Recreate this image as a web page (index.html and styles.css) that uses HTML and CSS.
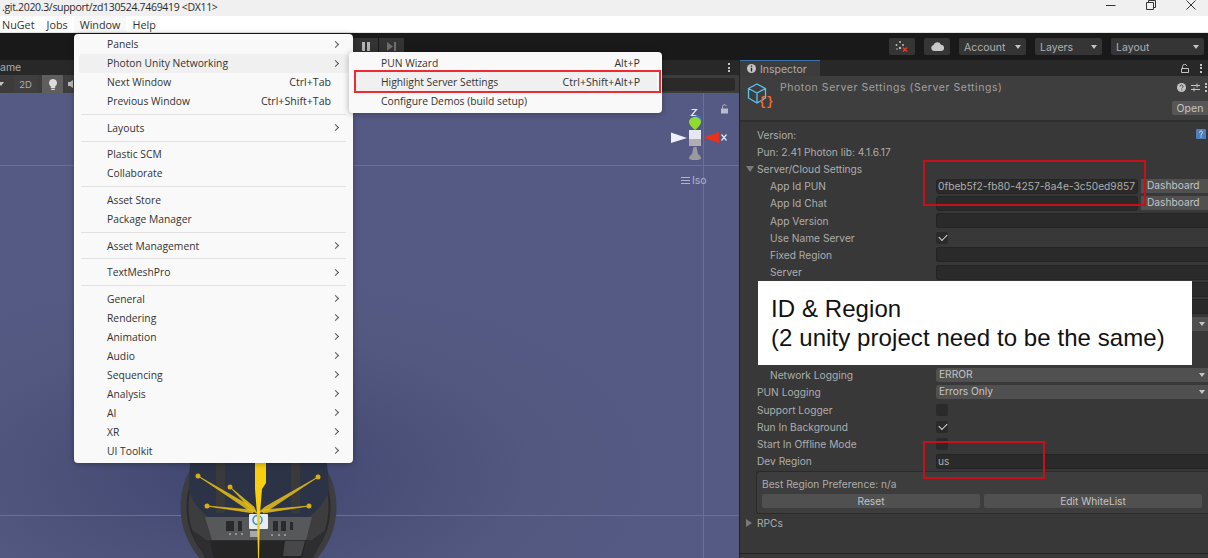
FILE: index.html
```html
<!DOCTYPE html>
<html lang="en">
<head>
    <meta charset="UTF-8">
    <meta name="viewport" content="width=device-width, initial-scale=1.0">
    <title>Photon Server Settings</title>
    <link rel="stylesheet" href="styles.css">
</head>
<body>

    <div class="titlebar">
        <span class="title-text">.git.2020.3/support/zd130524.7469419 &lt;DX11&gt;</span>
        <div class="window-controls">
            <svg width="10" height="10" viewBox="0 0 10 10"><path d="M0 5.500h9.500" stroke="#333" fill="none"/></svg>
            <svg width="10" height="10" viewBox="0 0 10 10"><path d="M.5 2.500h7v7h-7zM2.500 2.500V.5h7v7h-2" stroke="#333" fill="none"/></svg>
            <svg width="10" height="10" viewBox="0 0 10 10"><path d="M.5.5l9 9M9.500.5l-9 9" stroke="#333" fill="none"/></svg>
        </div>
    </div>

    <div class="menubar">
        <span class="menubar-item item-nuget">NuGet</span>
        <span class="menubar-item">Jobs</span>
        <span class="menubar-item active">Window</span>
        <span class="menubar-item">Help</span>
    </div>

    <div class="toolbar">
        <div class="play-group">
            <span class="play-btn">
                <svg width="8" height="9" viewBox="0 0 8 9"><path d="M0 0h3v9H0zM5 0h3v9H5z" fill="#b4b4b4"/></svg>
            </span>
            <span class="play-btn">
                <svg width="9" height="9" viewBox="0 0 9 9"><path d="M0 0l6 4.500-6 4.500zM7 0h2v9H7z" fill="#6e6e6e"/></svg>
            </span>
        </div>
        <div class="tool-group">
            <span class="tool-btn icon-btn">
                <svg width="14" height="12" viewBox="0 0 14 12">
                    <g fill="#bcbcbc">
                        <circle cx="5" cy="1" r="1"/><circle cx="1.500" cy="4" r="1"/><circle cx="8" cy="4" r="1"/><circle cx="5" cy="7" r="1.200"/><circle cx="2" cy="8" r=".8"/>
                    </g>
                    <path d="M8 6.500l4 4M12 6.500l-4 4" stroke="#e8392c" stroke-width="1.600"/>
                </svg>
            </span>
            <span class="tool-btn icon-btn">
                <svg width="13" height="9" viewBox="0 0 13 9"><path d="M3 9a3 3 0 0 1-.5-5.900A4 4 0 0 1 10 2.800 3.100 3.100 0 0 1 10 9z" fill="#c8c8c8"/></svg>
            </span>
            <span class="tool-btn drop account"><span class="drop-text">Account</span><i class="caret"></i></span>
            <span class="tool-btn drop layers"><span class="drop-text">Layers</span><i class="caret"></i></span>
            <span class="tool-btn drop layout"><span class="drop-text">Layout</span><i class="caret"></i></span>
        </div>
    </div>

    <div class="workspace">
        <div class="scene">
            <div class="scene-tabs">
                <span class="scene-tab-name">ame</span>
                <span class="dots"><i></i><i></i><i></i></span>
            </div>
            <div class="scene-tools">
                <i class="caret small"></i>
                <span class="scene-btn btn-2d">2D</span>
                <span class="scene-btn btn-light">
                    <svg width="8" height="11" viewBox="0 0 8 11"><path d="M4 0a4 4 0 0 1 2.200 7.300V9H1.800V7.300A4 4 0 0 1 4 0zM2.200 9.700h3.600V11H2.200z" fill="#dcdcdc"/></svg>
                </span>
                <span class="scene-btn btn-audio">
                    <svg width="7" height="8" viewBox="0 0 7 8"><path d="M0 2h2l3-2v8L2 6H0z" fill="#bdbdbd"/></svg>
                </span>
                <span class="scene-search"></span>
            </div>
            <div class="canvas">
                <div class="grid-line line-a"></div>
                <div class="grid-line line-b"></div>
                <div class="grid-line line-v"></div>

                <svg class="gizmo" width="80" height="100" viewBox="660 100 80 100">
                    <path d="M691.500 109.500h5l-5 6h5" stroke="#e6e7ef" stroke-width="1.200" fill="none"/>
                    <circle cx="697" cy="120" r="4.500" fill="#3f70d8"/>
                    <path d="M689 122a6 5 0 0 1 12 0q0 3-6 8-6-5-6-8z" fill="#8fdc2e"/>
                    <rect x="689" y="130" width="12" height="9" fill="#e6e7f0"/>
                    <rect x="689" y="139" width="12" height="7" fill="#aeaeb4"/>
                    <path d="M671 132.500L687 138l-16 5z" fill="#eff0f5"/>
                    <path d="M719 132v11l-16-5.500z" fill="#e8301f"/>
                    <path d="M721.500 134.500l5 6M726.500 134.500l-5 6" stroke="#e6e7ef" stroke-width="1.200"/>
                    <path d="M693.500 147h3l1.500 7q3 2 3 4t-6 2-6-2 3-4z" fill="#9a9a9e"/>
                    <path d="M721 108.500h7v5h-7z" fill="#b9bbc8"/>
                    <path d="M722.500 108.500v-2a2 2 0 0 1 3.800-.6" fill="none" stroke="#b9bbc8"/>
                    <path d="M681 177.500h9M681 180.500h9M681 183.500h9" stroke="#b1b3c6"/>
                </svg>
                <span class="iso-label">Iso</span>

                <svg class="robot" width="180" height="118" viewBox="170 440 180 118">
                    <circle cx="258.500" cy="507" r="78" fill="#3d3d3f"/>
                    <circle cx="258.500" cy="507" r="71" fill="none" stroke="#2b2b2d" stroke-width="2"/>
                    <path d="M190 463h137l2 27q-4 14-20 27H208q-16-13-19-27z" fill="#2c3347"/>
                    <path d="M216 463h9v50h-9zM291 463h9v50h-9z" fill="#3b3a3a"/>
                    <path d="M205 517h107l-6 23H212z" fill="#56585a"/>
                    <path d="M190 528l15 30h108l15-30-16 12H206z" fill="#2e2e30"/>
                    <path d="M210 541h96l-4 17h-88z" fill="#252526"/>
                    <path d="M285 541h20l-4 15h-18z" fill="#47474a"/>
                    <g fill="#2a2a2c">
                        <rect x="226" y="521" width="8" height="10"/><rect x="238" y="521" width="4" height="10"/>
                        <rect x="273" y="521" width="5" height="10"/><rect x="281" y="521" width="5" height="10"/><rect x="290" y="522" width="3" height="8"/>
                    </g>
                    <g fill="#a8a8a8">
                        <circle cx="230" cy="534" r="1"/><circle cx="236" cy="534" r="1"/><circle cx="242" cy="534" r="1"/>
                        <circle cx="272" cy="535" r="1"/><circle cx="279" cy="535" r="1"/><circle cx="285" cy="535" r="1"/>
                        <rect x="250" y="531" width="8" height="6"/>
                    </g>
                    <rect x="249" y="514" width="19" height="15" rx="1" fill="#e6ecf0"/>
                    <circle cx="257.500" cy="520" r="4.500" fill="none" stroke="#3a8fc4" stroke-width="1.500"/>
                    <g fill="#e6bf1a" fill-opacity=".85" stroke="#f1c40a" stroke-width=".6">
                        <path d="M198 476l54 31 5 6-10-4zM230 487l24 20 2 5-7-5zM318 477l-53 30-7 6 12-4zM207 506l46 4v3zM309 506l-46 4v3z"/>
                    </g>
                    <path d="M255 463h11v20l-4 6-2 25-1 44h-1l-1-44-2-25z" fill="#f7cf0f"/>
                    <g fill="#d9ae12">
                        <circle cx="198" cy="476" r="2.500"/><circle cx="230" cy="487" r="2.500"/><circle cx="318" cy="477" r="2.500"/><circle cx="207" cy="506" r="2.500"/><circle cx="309" cy="506" r="2.500"/>
                    </g>
                </svg>
            </div>
        </div>

        <div class="inspector">
            <div class="inspector-tabs">
                <div class="inspector-tab">
                    <svg width="9" height="9" viewBox="0 0 9 9"><circle cx="4.500" cy="4.500" r="4.500" fill="#c4c4c4"/><path d="M3.800 1.500h1.400v1.300H3.800zM3.800 3.800h1.400v3.700H3.800z" fill="#282828"/></svg>
                    <span class="tab-text">Inspector</span>
                </div>
                <div class="tab-actions">
                    <svg width="8" height="9" viewBox="0 0 8 9"><path d="M1.500 4V2.500a2.200 2.200 0 0 1 4.300-.6M.5 4.500h7v4h-7z" stroke="#c4c4c4" fill="none"/></svg>
                    <span class="dots"><i></i><i></i><i></i></span>
                </div>
            </div>

            <div class="inspector-header">
                <svg class="asset-icon" width="26" height="26" viewBox="0 0 26 26">
                    <path d="M10 2l8.500 4.500v9.500L10 21l-8.500-5V6.500zM1.500 6.500L10 11l8.500-4.500M10 11v10" stroke="#5cc4ee" stroke-width="1.300" fill="#3e3e3e" stroke-linejoin="round"/>
                    <text class="braces" x="12" y="23">{}</text>
                </svg>
                <span class="asset-title">Photon Server Settings (Server Settings)</span>
                <div class="header-actions">
                    <div class="header-icons">
                        <svg width="9" height="9" viewBox="0 0 9 9"><circle cx="4.500" cy="4.500" r="4.500" fill="#c4c4c4"/><path d="M3 3.500a1.500 1.500 0 1 1 2.300 1.300L4.800 5.500M4.800 6.500v1" stroke="#3e3e3e" fill="none"/></svg>
                        <svg width="9" height="9" viewBox="0 0 9 9"><path d="M0 2.500h9M0 6.500h9M6 .5v4M3 4.500v4" stroke="#c4c4c4" fill="none"/></svg>
                        <span class="dots"><i></i><i></i><i></i></span>
                    </div>
                    <span class="open-btn">Open</span>
                </div>
            </div>

            <div class="inspector-body">
                <div class="row"><span class="label">Version:</span>
                    <svg class="help-icon" width="10" height="10" viewBox="0 0 10 10"><rect width="10" height="10" rx="1" fill="#4f7fb8"/><path d="M3.500 3.500a1.500 1.500 0 1 1 2.300 1.300l-.8.700v1M5 7.500v1" stroke="#dfe9f5" fill="none"/></svg>
                </div>
                <div class="row"><span class="label">Pun: 2.41 Photon lib: 4.1.6.17</span></div>
                <div class="row section"><i class="tri down"></i><span class="label">Server/Cloud Settings</span></div>
                <div class="row sub"><span class="label">App Id PUN</span><span class="field short">0fbeb5f2-fb80-4257-8a4e-3c50ed9857</span><span class="dash-btn">Dashboard</span></div>
                <div class="row sub"><span class="label">App Id Chat</span><span class="field short"></span><span class="dash-btn">Dashboard</span></div>
                <div class="row sub"><span class="label">App Version</span><span class="field"></span></div>
                <div class="row sub"><span class="label">Use Name Server</span><span class="check on"></span></div>
                <div class="row sub"><span class="label">Fixed Region</span><span class="field"></span></div>
                <div class="row sub"><span class="label">Server</span><span class="field"></span></div>
                <div class="row sub"><span class="label"></span><span class="field"></span></div>
                <div class="row sub"><span class="label"></span><span class="field"></span></div>
                <div class="row sub"><span class="label"></span><span class="select"></span></div>
                <div class="row sub"></div>
                <div class="row sub"></div>
                <div class="row sub"><span class="label">Network Logging</span><span class="select">ERROR</span></div>
                <div class="row"><span class="label">PUN Logging</span><span class="select">Errors Only</span></div>
                <div class="row"><span class="label">Support Logger</span><span class="check"></span></div>
                <div class="row"><span class="label">Run In Background</span><span class="check on"></span></div>
                <div class="row"><span class="label">Start In Offline Mode</span><span class="check"></span></div>
                <div class="row"><span class="label">Dev Region</span><span class="field">us</span></div>

                <div class="region-box">
                    <div class="region-text">Best Region Preference: n/a</div>
                    <div class="region-buttons">
                        <span class="region-btn">Reset</span>
                        <span class="region-btn">Edit WhiteList</span>
                    </div>
                </div>
                <div class="row section rpcs"><i class="tri right"></i><span class="label">RPCs</span></div>
            </div>
            <div class="status-line"></div>
        </div>
    </div>

    <!-- Window menu, open over everything else -->
    <div class="menu window-menu">
        <div class="menu-item"><span>Panels</span><i class="chev"></i></div>
        <div class="menu-item hover"><span>Photon Unity Networking</span><i class="chev"></i></div>
        <div class="menu-item"><span>Next Window</span><em>Ctrl+Tab</em><i class="no-chev"></i></div>
        <div class="menu-item"><span>Previous Window</span><em>Ctrl+Shift+Tab</em><i class="no-chev"></i></div>
        <div class="menu-sep"></div>
        <div class="menu-item"><span>Layouts</span><i class="chev"></i></div>
        <div class="menu-sep"></div>
        <div class="menu-item"><span>Plastic SCM</span></div>
        <div class="menu-item"><span>Collaborate</span></div>
        <div class="menu-sep"></div>
        <div class="menu-item"><span>Asset Store</span></div>
        <div class="menu-item"><span>Package Manager</span></div>
        <div class="menu-sep"></div>
        <div class="menu-item"><span>Asset Management</span><i class="chev"></i></div>
        <div class="menu-sep"></div>
        <div class="menu-item"><span>TextMeshPro</span><i class="chev"></i></div>
        <div class="menu-sep"></div>
        <div class="menu-item"><span>General</span><i class="chev"></i></div>
        <div class="menu-item"><span>Rendering</span><i class="chev"></i></div>
        <div class="menu-item"><span>Animation</span><i class="chev"></i></div>
        <div class="menu-item"><span>Audio</span><i class="chev"></i></div>
        <div class="menu-item"><span>Sequencing</span><i class="chev"></i></div>
        <div class="menu-item"><span>Analysis</span><i class="chev"></i></div>
        <div class="menu-item"><span>AI</span><i class="chev"></i></div>
        <div class="menu-item"><span>XR</span><i class="chev"></i></div>
        <div class="menu-item"><span>UI Toolkit</span><i class="chev"></i></div>
    </div>

    <div class="menu photon-menu">
        <div class="menu-item"><span>PUN Wizard</span><em>Alt+P</em></div>
        <div class="menu-item hover"><span>Highlight Server Settings</span><em>Ctrl+Shift+Alt+P</em></div>
        <div class="menu-item"><span>Configure Demos (build setup)</span></div>
    </div>

    <!-- Red boxes and the note pasted on top of the screenshot -->
    <div class="mark mark-menu"></div>
    <div class="mark mark-appid"></div>
    <div class="mark mark-region"></div>
    <div class="note">ID &amp; Region<br>(2 unity project need to be the same)</div>

</body>
</html>
```

FILE: styles.css
```css
* {
    box-sizing: border-box;
}
html, body {
    margin: 0;
    height: 100%;
}
body {
    position: relative;
    width: 1208px;
    height: 558px;
    overflow: hidden;
    display: flex;
    flex-direction: column;
    font-family: 'Inter', 'Liberation Sans', sans-serif;
    font-size: 10.2px;
    color: #adadad;
    background-color: #383838;
}

/* window chrome */
.titlebar {
    height: 16px;
    flex: none;
    display: flex;
    justify-content: space-between;
    background-color: #f0f0f0;
    color: #2b2b2b;
    font-family: 'Open Sans', 'Liberation Sans', sans-serif;
    font-size: 10.5px;
    letter-spacing: -.32px;
    line-height: 14px;
    padding-left: 2px;
}
.window-controls {
    display: flex;
    gap: 25px;
    padding-right: 12px;
}
.window-controls svg {
    margin-left: 5px;
}
.menubar {
    height: 17px;
    flex: none;
    display: flex;
    background-color: #fff;
    border-bottom: 1px solid #e4e4e4;
    color: #333;
    font-family: 'Open Sans', 'Liberation Sans', sans-serif;
    font-size: 10.8px;
    line-height: 18px;
}
.menubar-item {
    padding: 0 6px;
}
.item-nuget {
    padding-left: 2px;
}
.menubar-item.active {
    background-color: #f8f8f8;
}

.toolbar {
    height: 27px;
    flex: none;
    display: flex;
    justify-content: space-between;
    padding: 5px 4px 0 353px;
    background-color: #191919;
}
.play-group {
    display: flex;
    gap: 1px;
}
.play-btn {
    width: 25px;
    height: 17px;
    display: flex;
    align-items: center;
    justify-content: center;
    background-color: #333;
}
.tool-group {
    display: flex;
    gap: 9px;
}
.tool-btn {
    height: 17px;
    display: flex;
    align-items: center;
    background-color: #353535;
    border-radius: 2px;
    color: #b0b0b0;
}
.icon-btn {
    width: 26px;
    justify-content: center;
}
.drop {
    justify-content: space-between;
    padding: 0 5px;
    font-size: 10.5px;
}
.drop-text {
    padding-top: 1px;
}
.account { width: 67px; }
.layers { width: 67px; }
.layout { width: 93px; }
.caret {
    width: 0;
    height: 0;
    border-left: 3.5px solid transparent;
    border-right: 3.5px solid transparent;
    border-top: 4px solid #c4c4c4;
}

/* scene panel */
.workspace {
    flex: 1;
    display: flex;
    min-height: 0;
}
.scene {
    width: 739px;
    display: flex;
    flex-direction: column;
}
.scene-tabs {
    height: 15px;
    display: flex;
    justify-content: space-between;
    align-items: center;
    padding-right: 9px;
    background-color: #282828;
    font-size: 10.5px;
}
.dots {
    display: inline-flex;
    flex-direction: column;
    gap: 1.5px;
}
.dots i {
    width: 2px;
    height: 2px;
    background-color: #c4c4c4;
}
.scene-tools {
    height: 18px;
    display: flex;
    align-items: center;
    background-color: #3c3c3c;
}
.caret.small {
    margin: 0 10px 0 -2px;
}
.scene-btn {
    height: 18px;
    display: flex;
    align-items: center;
    justify-content: center;
    background-color: #3f3f3f;
}
.btn-2d {
    width: 23px;
    font-size: 9.5px;
    padding-top: 1px;
}
.btn-light {
    width: 21px;
    margin-left: 5px;
    background-color: #5e5e5e;
}
.btn-audio {
    width: 12px;
    margin-left: 2px;
}
.scene-search {
    height: 13px;
    width: 80px;
    margin-left: auto;
    margin-right: 4px;
    border-radius: 3px;
    background-color: #2a2a2a;
}
.canvas {
    flex: 1;
    position: relative;
    overflow: hidden;
    background: radial-gradient(ellipse 420px 200px at 240px 380px, #3f466f 0%, #535880 70%, #555a85 100%);
}
.grid-line {
    position: absolute;
    background-color: #6b6f96;
}
.line-a {
    left: 0;
    right: 0;
    top: 72px;
    height: 1px;
}
.line-b {
    left: 0;
    right: 0;
    top: 422px;
    height: 1px;
}
.line-v {
    left: 703px;
    top: 0;
    width: 1px;
    height: 100%;
}
.gizmo {
    position: absolute;
    left: 660px;
    top: 7px;
}
.iso-label {
    position: absolute;
    left: 692px;
    top: 81px;
    color: #b1b3c6;
    font-size: 10.5px;
}
.robot {
    position: absolute;
    left: 170px;
    top: 347px;
}

/* inspector */
.inspector {
    flex: 1;
    display: flex;
    flex-direction: column;
    border-left: 1px solid #222;
}
.inspector-tabs {
    height: 16px;
    flex: none;
    display: flex;
    justify-content: space-between;
    background-color: #282828;
}
.inspector-tab {
    width: 80px;
    display: flex;
    align-items: center;
    gap: 4px;
    padding-left: 7px;
    background-color: #3c3c3c;
    border-top: 1px solid #3a72b0;
    font-size: 10.5px;
}
.tab-text {
    padding-top: 1px;
}
.tab-actions {
    display: flex;
    align-items: center;
    gap: 11px;
    padding-right: 6px;
}
.inspector-header {
    height: 46px;
    flex: none;
    display: flex;
    background-color: #3e3e3e;
    border-bottom: 2px solid #2f2f2f;
}
.asset-icon {
    margin: 6px 0 0 7px;
    flex: none;
}
.braces {
    fill: #f26a30;
    font-family: 'Liberation Mono', monospace;
    font-size: 12px;
    font-weight: bold;
}
.asset-title {
    margin: 5px 0 0 7px;
    font-size: 10.5px;
    letter-spacing: .55px;
    color: #a0a0a0;
}
.header-actions {
    margin-left: auto;
    display: flex;
    flex-direction: column;
    align-items: flex-end;
}
.header-icons {
    display: flex;
    align-items: center;
    gap: 5px;
    height: 22px;
    padding-right: 1px;
}
.open-btn {
    width: 36px;
    height: 14px;
    margin-top: 3px;
    background-color: #575757;
    border-radius: 2px 0 0 2px;
    text-align: center;
    line-height: 15px;
    font-size: 10.5px;
    color: #c4c4c4;
}
.inspector-body {
    flex: 1;
    padding-top: 4px;
}
.row {
    position: relative;
    height: 17.2px;
    display: flex;
    align-items: center;
    padding-left: 17px;
}
.row .label {
    width: 179px;
    flex: none;
}
.row.sub {
    padding-left: 30px;
}
.row.sub .label {
    width: 166px;
}
.tri {
    position: absolute;
    left: 6px;
    width: 0;
    height: 0;
}
.tri.down {
    border-left: 4px solid transparent;
    border-right: 4px solid transparent;
    border-top: 6px solid #7a7a7a;
}
.tri.right {
    border-top: 4px solid transparent;
    border-bottom: 4px solid transparent;
    border-left: 6px solid #7a7a7a;
}
.field {
    flex: 1;
    height: 15px;
    padding-left: 1px;
    line-height: 13px;
    background-color: #2a2a2a;
    border: 1px solid #242424;
    border-right: none;
    border-radius: 3px 0 0 3px;
    overflow: hidden;
    white-space: nowrap;
}
.field.short {
    flex: none;
    width: 202px;
    border-right: 1px solid #242424;
    border-radius: 3px;
}
.dash-btn {
    flex: 1;
    height: 14px;
    margin-left: 3px;
    padding-left: 6px;
    line-height: 13px;
    background-color: #505050;
    color: #c4c4c4;
}
.check {
    width: 12px;
    height: 12px;
    border-radius: 2px;
    background-color: #2a2a2a;
    position: relative;
}
.check.on::after {
    content: "";
    position: absolute;
    left: 3px;
    top: 2px;
    width: 7px;
    height: 4px;
    border-left: 1.5px solid #dcdcdc;
    border-bottom: 1.5px solid #dcdcdc;
    transform: rotate(-45deg);
}
.select {
    flex: 1;
    position: relative;
    height: 14px;
    padding-left: 3px;
    line-height: 13px;
    background-color: #505050;
    border-radius: 3px 0 0 3px;
    color: #c4c4c4;
}
.select::after {
    content: "";
    position: absolute;
    right: 3px;
    top: 5px;
    border-left: 3.5px solid transparent;
    border-right: 3.5px solid transparent;
    border-top: 4px solid #c4c4c4;
}
.help-icon {
    position: absolute;
    right: 2px;
    top: 3px;
}
.region-box {
    height: 43px;
    margin: 1px 0 0 16px;
    padding: 5px 6px 0 5px;
    background-color: #3d3d3d;
    border: 1px solid #2a2a2a;
    border-right: none;
    border-radius: 3px 0 0 3px;
}
.region-text {
    height: 17px;
    line-height: 15px;
}
.region-buttons {
    display: flex;
    gap: 4px;
}
.region-btn {
    flex: 1;
    height: 14px;
    line-height: 14px;
    text-align: center;
    background-color: #505050;
    border-radius: 2px;
    color: #c4c4c4;
}
.rpcs {
    margin-top: 1px;
}
.status-line {
    height: 5px;
    flex: none;
    background-color: #383838;
    border-top: 1px solid #222;
}

/* open menus */
.menu {
    position: absolute;
    background-color: #f9f9f9;
    border-radius: 4px;
    box-shadow: 0 1px 6px rgba(0, 0, 0, 0.3);
    font-family: 'Open Sans', 'Liberation Sans', sans-serif;
    font-size: 10.3px;
    color: #333;
}
.window-menu {
    left: 74px;
    top: 34px;
    width: 279px;
    height: 429px;
    padding: 0.7px 5px 0;
}
.photon-menu {
    left: 349px;
    top: 52px;
    width: 313px;
    height: 61px;
    padding: 1px 5px;
}
.menu-item {
    height: 19px;
    display: flex;
    align-items: center;
    padding: 0 8px 0 28px;
    border-radius: 3px;
}
.photon-menu .menu-item {
    padding: 0 17px 0 27px;
}
.menu-item.hover {
    background-color: #f0f0f0;
}
.menu-item em {
    margin-left: auto;
    margin-right: 4px;
    font-style: normal;
    font-size: 10.6px;
}
.photon-menu .menu-item em {
    margin-right: 0;
}
.chev {
    margin-left: auto;
    width: 5px;
    height: 5px;
    border-top: 1px solid #555;
    border-right: 1px solid #555;
    transform: translateX(-2px) rotate(45deg);
}
.no-chev {
    width: 5px;
}
.menu-sep {
    height: 1px;
    margin: 3.3px 2px;
    background-color: #e2e2e2;
}

/* annotations */
.mark {
    position: absolute;
    border: 2px solid #c8101a;
}
.mark-menu {
    left: 354px;
    top: 70px;
    width: 307px;
    height: 23px;
    border-color: #ee2b30;
}
.mark-appid {
    left: 923px;
    top: 160px;
    width: 223px;
    height: 46px;
}
.mark-region {
    left: 923px;
    top: 441px;
    width: 122px;
    height: 38px;
}
.note {
    position: absolute;
    left: 758px;
    top: 281px;
    width: 434px;
    height: 84px;
    padding: 13px 0 0 13px;
    background-color: #fff;
    color: #111;
    font-family: 'Liberation Sans', Arial, sans-serif;
    font-size: 24px;
    letter-spacing: .08px;
    line-height: 29px;
}
```
